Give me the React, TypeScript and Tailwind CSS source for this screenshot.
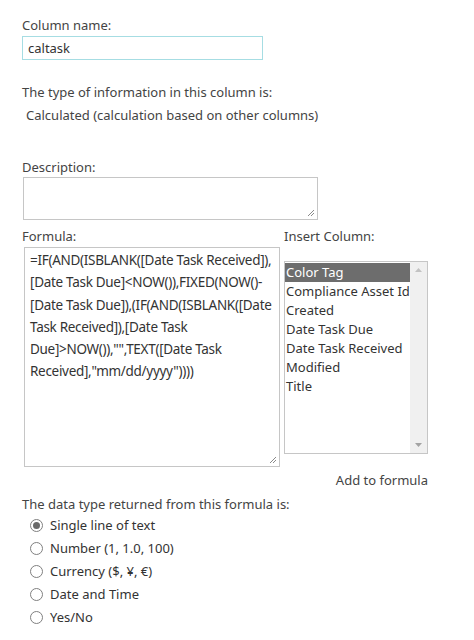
import { useState } from 'react';

const COLUMNS = [
	'Color Tag',
	'Compliance Asset Id',
	'Created',
	'Date Task Due',
	'Date Task Received',
	'Modified',
	'Title',
];

const RETURN_TYPES = [
	'Single line of text',
	'Number (1, 1.0, 100)',
	'Currency ($, ¥, €)',
	'Date and Time',
	'Yes/No',
];

// wrapped the way the reference textarea wraps it
const FORMULA_LINES = [
	'=IF(AND(ISBLANK([Date Task Received]),',
	'[Date Task Due]<NOW()),FIXED(NOW()-',
	'[Date Task Due]),(IF(AND(ISBLANK([Date',
	'Task Received]),[Date Task',
	'Due]>NOW()),"",TEXT([Date Task',
	'Received],"mm/dd/yyyy"))))',
];

function Grip() {
	return (
		<svg className="absolute right-[2px] bottom-[2px] w-[9px] h-[9px]" viewBox="0 0 9 9">
			<path d="M8 2 2 8M8 5 5 8" stroke="#8a8a8a" strokeWidth="1" />
		</svg>
	);
}

export default function App() {
	const [selected, setSelected] = useState('Color Tag');
	const [returnType, setReturnType] = useState(RETURN_TYPES[0]);

	return (
		<div
			className="w-[474px] h-[640px] bg-white text-[#444] text-[13px] leading-[18px] pl-[22px] pt-[16px] overflow-hidden"
			style={{ fontFamily: '"Noto Sans", "Open Sans", sans-serif' }}
		>
			<div>Column name:</div>
			<div className="mt-[2px] w-[241px] h-[24px] border border-[#a6dde3] flex items-center pl-[5px] text-[#333]">
				caltask
			</div>

			<div className="mt-[23px]">The type of information in this column is:</div>
			<div className="mt-[5px] pl-[4px]">Calculated (calculation based on other columns)</div>

			<div className="mt-[34px]">Description:</div>
			<div className="relative mt-[1px] ml-[1px] w-[295px] h-[43px] border border-[#c6c6c6]">
				<Grip />
			</div>

			<div className="mt-[7px] flex">
				<div className="w-[262px]">
					<div>Formula:</div>
					<div className="relative mt-[2px] ml-[2px] w-[256px] h-[220px] border border-[#c6c6c6] px-[5px] pt-[1px] text-[13.5px] leading-[22.3px] text-[#333] whitespace-pre tracking-[-0.3px] overflow-hidden">
						{FORMULA_LINES.join('\n')}
						<Grip />
					</div>
				</div>
				<div className="w-[145px]">
					<div>Insert Column:</div>
					<div className="mt-[16px] w-[144px] h-[193px] border border-[#c6c6c6] flex">
						<ul className="flex-1 pt-[1px] overflow-hidden">
							{COLUMNS.map((c) => (
								<li
									key={c}
									onClick={() => setSelected(c)}
									className={`h-[19px] pl-[1px] leading-[19px] whitespace-nowrap cursor-default ${
										c === selected ? 'bg-[#6d6d6d] text-white' : 'text-[#333]'
									}`}
								>
									{c}
								</li>
							))}
						</ul>
						<div className="w-[17px] bg-[#f0f0f0] flex flex-col justify-between items-center py-[6px]">
							<svg className="w-[7px] h-[4px]" viewBox="0 0 7 4">
								<path d="M0 4 3.5 0 7 4Z" fill="#c2c2c2" />
							</svg>
							<svg className="w-[7px] h-[4px]" viewBox="0 0 7 4">
								<path d="M0 0 3.5 4 7 0Z" fill="#a3a3a3" />
							</svg>
						</div>
					</div>
				</div>
			</div>

			<div className="mt-[4px] w-[406px] text-right">Add to formula</div>

			<div className="mt-[6px]">The data type returned from this formula is:</div>
			<div className="mt-[3px] flex flex-col gap-[5px] pl-[8px]">
				{RETURN_TYPES.map((t) => (
					<label key={t} className="flex items-center gap-[7px] h-[18px]" onClick={() => setReturnType(t)}>
						<span className="w-[13px] h-[13px] rounded-full border border-[#808080] flex items-center justify-center bg-white">
							{t === returnType && <span className="w-[7px] h-[7px] rounded-full bg-[#6a6a6a]" />}
						</span>
						<span className="text-[#333]">{t}</span>
					</label>
				))}
			</div>
		</div>
	);
}
